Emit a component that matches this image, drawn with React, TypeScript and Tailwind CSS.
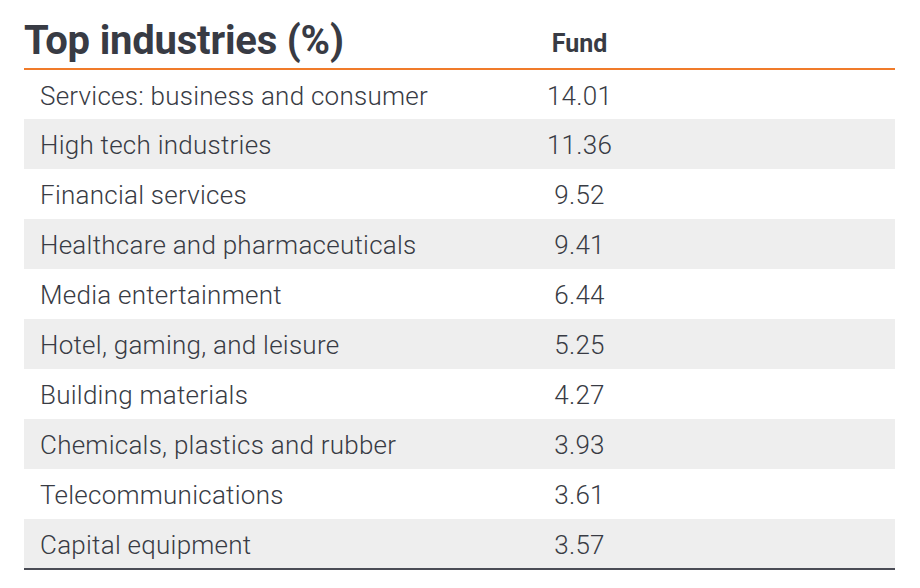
const rows: [string, string][] = [
  ["Services: business and consumer", "14.01"],
  ["High tech industries", "11.36"],
  ["Financial services", "9.52"],
  ["Healthcare and pharmaceuticals", "9.41"],
  ["Media entertainment", "6.44"],
  ["Hotel, gaming, and leisure", "5.25"],
  ["Building materials", "4.27"],
  ["Chemicals, plastics and rubber", "3.93"],
  ["Telecommunications", "3.61"],
  ["Capital equipment", "3.57"],
];

export default function App() {
  return (
    <div className="w-[920px] h-[588px] bg-white pl-[24px] pt-[14px] text-[#383b44] font-['Roboto',sans-serif]">
      <table className="w-[871px] border-collapse">
        <thead>
          <tr className="border-b-2 border-[#f07b2a]">
            <th className="w-[451px] text-left font-bold text-[40px] leading-[54px] tracking-[-0.2px]">Top industries (%)</th>
            <th className="w-[209px] text-center font-bold text-[25px] align-bottom pb-[6px]">Fund</th>
            <th className="w-[211px]"></th>
          </tr>
        </thead>
        <tbody className="border-b-2 border-[#4a4c55]">
          {rows.map(([name, value], i) => (
            <tr key={name} className={i % 2 === 1 ? "bg-[#eeeeee]" : "bg-white"}>
              <td className="h-[50px] pl-[16px] pt-[3px] text-[26px] font-light tracking-[0.25px]">{name}</td>
              <td className="h-[50px] pt-[3px] text-center text-[26px] font-light tracking-[0.25px]">{value}</td>
              <td className="h-[50px]"></td>
            </tr>
          ))}
        </tbody>
      </table>
    </div>
  );
}
